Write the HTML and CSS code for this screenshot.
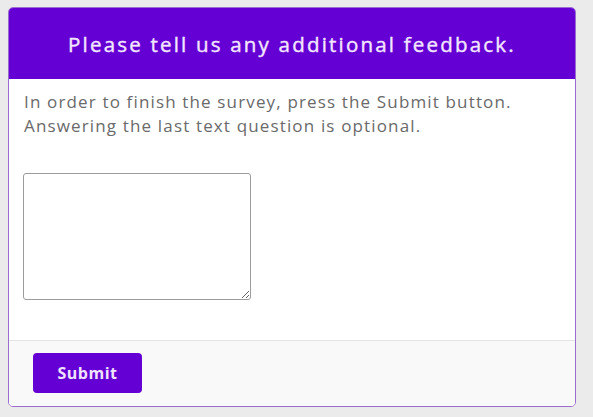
FILE: index.html
```html
<!DOCTYPE html>
<html lang="en">
<head>
    <meta charset="UTF-8">
    <meta name="viewport" content="width=device-width, initial-scale=1.0">
    <title>Survey feedback</title>
    <link rel="stylesheet" href="styles.css">
</head>
<body>
    <div class="card">
        <div class="card-header">
            <h2>Please tell us any additional feedback.</h2>
        </div>
        <div class="card-body">
            <p>In order to finish the survey, press the Submit button.<br>Answering the last text question is optional.</p>
            <textarea class="feedback"></textarea>
        </div>
        <div class="card-footer">
            <button type="button">Submit</button>
        </div>
    </div>
</body>
</html>
```

FILE: styles.css
```css
body {
    font-family: "Open Sans", sans-serif;
    background-color: #ebebeb;
    margin: 0;
    padding: 7px 17px 10px 8px;
}
.card {
    background-color: #fff;
    border: 1px solid #9a6ccf;
    border-radius: 5px;
    overflow: hidden;
}
.card-header {
    background-color: #6400d4;
    height: 71px;
    display: flex;
    align-items: center;
    justify-content: center;
}
.card-header h2 {
    margin: 0;
    font-size: 20.5px;
    font-weight: normal;
    letter-spacing: 2.2px;
    -webkit-text-stroke: 0.4px currentColor;
    color: #f4e6ff;
}
.card-body {
    padding: 11px 15px 40px 15px;
}
.card-body p {
    margin: 0;
    font-size: 17px;
    line-height: 24px;
    letter-spacing: 1.15px;
    color: #6a6a6a;
}
.feedback {
    display: block;
    width: 228px;
    height: 127px;
    margin: 35px 0 0 -1px;
    box-sizing: border-box;
    border: 1.5px solid #9c9c9c;
    border-radius: 3px;
    resize: both;
}
.card-footer {
    background-color: #f9f9fa;
    border-top: 1px solid #e3e3e6;
    padding: 12px 24px 13px 24px;
}
.card-footer button {
    width: 109px;
    height: 40px;
    background-color: #6400d4;
    color: #f1e2ff;
    border: none;
    border-radius: 4px;
    font-family: "Open Sans", sans-serif;
    font-size: 16px;
    font-weight: bold;
    letter-spacing: 0.5px;
    cursor: pointer;
}
```
